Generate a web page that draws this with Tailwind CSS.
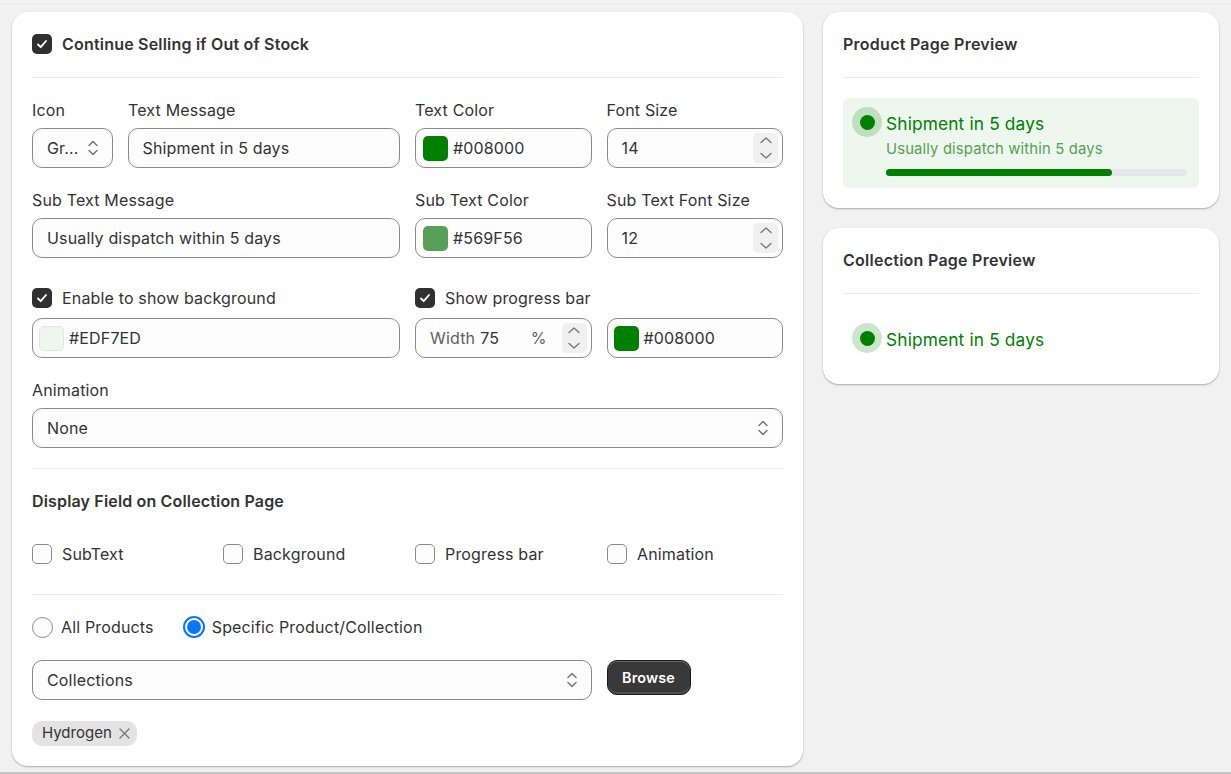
<!DOCTYPE html>
<html lang="en">
<head>
  <meta charset="UTF-8" />
  <meta name="viewport" content="width=device-width, initial-scale=1.0"/>
  <title>Inventory message</title>
  <script src="https://cdn.jsdelivr.net/npm/@tailwindcss/browser@4"></script>
</head>
<body class="bg-[#f1f1f1] font-['Inter',sans-serif] text-[16px] leading-6 tracking-[0.16px] text-[#333333]">
  <div class="h-[3px] bg-[#f3f3f3] border-b border-[#ebebeb] box-content"></div>
  <div class="flex items-start gap-5 px-3 pt-2 h-[770px] overflow-hidden border-b-2 border-[#c8c8c8]">

    <!-- settings card -->
    <div class="w-[791px] h-[754px] shrink-0 bg-white rounded-[16px] p-5 shadow-[0_1px_2px_rgba(0,0,0,0.3)]">
      <div class="flex items-center gap-2.5 pb-[21px] border-b border-[#ebebeb] font-semibold tracking-[0.2px]">
        <span class="w-5 h-5 rounded-[5px] bg-[#303030] flex items-center justify-center">
          <svg width="12" height="12" viewBox="0 0 12 12" fill="none" stroke="#fff" stroke-width="1.8" stroke-linecap="round" stroke-linejoin="round"><path d="M2 6.5 4.7 9.2 10 3"/></svg>
        </span>
        Continue Selling if Out of Stock
      </div>

      <div class="grid grid-cols-4 gap-x-[15px] pt-5">
        <div class="col-span-2 flex gap-[15px]">
          <div class="w-[81px] shrink-0">
            <div class="mb-1.5">Icon</div>
            <div class="h-10 rounded-[10px] border border-[#8a8a8a] bg-[#fdfdfd] pl-3.5 pr-[13px] flex items-center justify-between">
              Gr...
              <svg width="12" height="18" viewBox="0 0 12 18" fill="none" stroke="#757575" stroke-width="1.5" stroke-linecap="round" stroke-linejoin="round"><path d="M2 6.5 6 2.5 10 6.5M2 11.5 6 15.5 10 11.5"/></svg>
            </div>
          </div>
          <div class="flex-1">
            <div class="mb-1.5">Text Message</div>
            <div class="h-10 rounded-[10px] border border-[#8a8a8a] bg-[#fdfdfd] px-[13.5px] flex items-center">Shipment in 5 days</div>
          </div>
        </div>
        <div>
          <div class="mb-1.5">Text Color</div>
          <div class="h-10 rounded-[10px] border border-[#8a8a8a] bg-[#fdfdfd] pl-[7px] flex items-center gap-[5px]">
            <span class="w-[25px] h-[25px] rounded-[5px] bg-[#008000]"></span>#008000
          </div>
        </div>
        <div>
          <div class="mb-1.5">Font Size</div>
          <div class="h-10 rounded-[10px] border border-[#8a8a8a] bg-[#fdfdfd] pl-3.5 pr-1 flex items-center justify-between">
            14
            <span class="w-[25px] h-[30px] rounded-[5px] bg-[#f0f0f0] flex items-center justify-center">
              <svg width="14" height="24" viewBox="0 0 14 24" fill="none" stroke="#757575" stroke-width="1.3" stroke-linecap="round" stroke-linejoin="round"><path d="M2 6.5 7 2 12 6.5M2 17.5 7 22 12 17.5"/></svg>
            </span>
          </div>
        </div>

        <div class="col-span-2 mt-5">
          <div class="mb-1.5">Sub Text Message</div>
          <div class="h-10 rounded-[10px] border border-[#8a8a8a] bg-[#fdfdfd] px-3.5 flex items-center">Usually dispatch within 5 days</div>
        </div>
        <div class="mt-5">
          <div class="mb-1.5">Sub Text Color</div>
          <div class="h-10 rounded-[10px] border border-[#8a8a8a] bg-[#fdfdfd] pl-[7px] flex items-center gap-[5px]">
            <span class="w-[25px] h-[25px] rounded-[5px] bg-[#569f56]"></span>#569F56
          </div>
        </div>
        <div class="mt-5">
          <div class="mb-1.5">Sub Text Font Size</div>
          <div class="h-10 rounded-[10px] border border-[#8a8a8a] bg-[#fdfdfd] pl-3.5 pr-1 flex items-center justify-between">
            12
            <span class="w-[25px] h-[30px] rounded-[5px] bg-[#f0f0f0] flex items-center justify-center">
              <svg width="14" height="24" viewBox="0 0 14 24" fill="none" stroke="#757575" stroke-width="1.3" stroke-linecap="round" stroke-linejoin="round"><path d="M2 6.5 7 2 12 6.5M2 17.5 7 22 12 17.5"/></svg>
            </span>
          </div>
        </div>

        <div class="col-span-2 mt-[30px]">
          <div class="flex items-center gap-2.5 h-5 mb-2.5">
            <span class="w-5 h-5 rounded-[5px] bg-[#303030] flex items-center justify-center">
              <svg width="12" height="12" viewBox="0 0 12 12" fill="none" stroke="#fff" stroke-width="1.8" stroke-linecap="round" stroke-linejoin="round"><path d="M2 6.5 4.7 9.2 10 3"/></svg>
            </span>
            Enable to show background
          </div>
          <div class="h-10 rounded-[10px] border border-[#8a8a8a] bg-[#fdfdfd] pl-[6px] flex items-center gap-[5px]">
            <span class="w-[25px] h-[25px] rounded-[5px] bg-[#edf7ed] border border-[#dfe8df]"></span>#EDF7ED
          </div>
        </div>
        <div class="mt-[30px]">
          <div class="flex items-center gap-2.5 h-5 mb-2.5">
            <span class="w-5 h-5 rounded-[5px] bg-[#303030] flex items-center justify-center">
              <svg width="12" height="12" viewBox="0 0 12 12" fill="none" stroke="#fff" stroke-width="1.8" stroke-linecap="round" stroke-linejoin="round"><path d="M2 6.5 4.7 9.2 10 3"/></svg>
            </span>
            Show progress bar
          </div>
          <div class="h-10 rounded-[10px] border border-[#8a8a8a] bg-[#fdfdfd] pl-3.5 pr-1 flex items-center">
            <span class="text-[#616161] mr-[5px]">Width</span>75
            <span class="ml-auto mr-[15px] text-[#616161]">%</span>
            <span class="w-[25px] h-[30px] rounded-[5px] bg-[#f0f0f0] flex items-center justify-center">
              <svg width="14" height="24" viewBox="0 0 14 24" fill="none" stroke="#757575" stroke-width="1.3" stroke-linecap="round" stroke-linejoin="round"><path d="M2 6.5 7 2 12 6.5M2 17.5 7 22 12 17.5"/></svg>
            </span>
          </div>
        </div>
        <div class="mt-[60px]">
          <div class="h-10 rounded-[10px] border border-[#8a8a8a] bg-[#fdfdfd] pl-[6px] flex items-center gap-[5px]">
            <span class="w-[25px] h-[25px] rounded-[5px] bg-[#008000]"></span>#008000
          </div>
        </div>
      </div>

      <div class="mt-5 mb-5">
        <div class="mb-1.5">Animation</div>
        <div class="h-10 rounded-[10px] border border-[#8a8a8a] bg-[#fdfdfd] pl-3.5 pr-[13px] flex items-center justify-between">
          None
          <svg width="12" height="18" viewBox="0 0 12 18" fill="none" stroke="#757575" stroke-width="1.5" stroke-linecap="round" stroke-linejoin="round"><path d="M2 6.5 6 2.5 10 6.5M2 11.5 6 15.5 10 11.5"/></svg>
        </div>
      </div>

      <div class="border-t border-[#ebebeb] pt-5 pb-[30px]">
        <div class="font-semibold mb-[31px]">Display Field on Collection Page</div>
        <div class="grid grid-cols-[176px_177px_177px_176px] gap-x-[15px]">
          <div class="flex items-center gap-2.5 h-5"><span class="w-5 h-5 rounded-[5px] border border-[#8a8a8a] bg-[#fdfdfd]"></span>SubText</div>
          <div class="flex items-center gap-2.5 h-5"><span class="w-5 h-5 rounded-[5px] border border-[#8a8a8a] bg-[#fdfdfd]"></span>Background</div>
          <div class="flex items-center gap-2.5 h-5"><span class="w-5 h-5 rounded-[5px] border border-[#8a8a8a] bg-[#fdfdfd]"></span>Progress bar</div>
          <div class="flex items-center gap-2.5 h-5"><span class="w-5 h-5 rounded-[5px] border border-[#8a8a8a] bg-[#fdfdfd]"></span>Animation</div>
        </div>
      </div>

      <div class="border-t border-[#ebebeb] pt-5">
        <div class="flex items-center h-6 mb-[21px]">
          <span class="w-[21px] h-[21px] rounded-full border border-[#8a8a8a] bg-[#fdfdfd] mr-2"></span>All Products
          <span class="w-[22px] h-[22px] rounded-full border-2 border-[#0a75ff] bg-white ml-[29px] mr-[7px] flex items-center justify-center"><span class="w-3.5 h-3.5 rounded-full bg-[#0a75ff]"></span></span>Specific Product/Collection
        </div>
        <div class="grid grid-cols-4 gap-x-[15px] items-start">
          <div class="col-span-3">
            <div class="h-10 rounded-[10px] border border-[#8a8a8a] bg-[#fdfdfd] pl-3.5 pr-[13px] flex items-center justify-between">
              Collections
              <svg width="12" height="18" viewBox="0 0 12 18" fill="none" stroke="#757575" stroke-width="1.5" stroke-linecap="round" stroke-linejoin="round"><path d="M2 6.5 6 2.5 10 6.5M2 11.5 6 15.5 10 11.5"/></svg>
            </div>
          </div>
          <div>
            <button class="w-[84px] h-[35px] rounded-[10px] border border-[#1a1a1a] bg-[#383838] text-white text-[14.4px] font-semibold shadow-[inset_0_1px_0_rgba(255,255,255,0.25),inset_0_-2px_0_rgba(255,255,255,0.12)]">Browse</button>
          </div>
        </div>
        <div class="mt-[21px] inline-flex items-center h-[25px] pl-2.5 pr-[6px] pb-px rounded-[10px] bg-[#e3e3e3] text-[15px] tracking-normal gap-1.5">
          Hydrogen
          <svg width="13" height="13" viewBox="0 0 13 13" fill="none" stroke="#757575" stroke-width="1.3" stroke-linecap="round" class="mt-px"><path d="M2 2 11 11M11 2 2 11"/></svg>
        </div>
      </div>
    </div>

    <!-- previews -->
    <div class="w-[396px] shrink-0 flex flex-col gap-5">
      <div class="bg-white rounded-[16px] p-5 h-[196px] shadow-[0_1px_2px_rgba(0,0,0,0.3)]">
        <div class="font-semibold tracking-[0.26px] pb-[21px] border-b border-[#ebebeb]">Product Page Preview</div>
        <div class="mt-5 h-[90px] rounded-[6px] bg-[#edf7ed] pl-[9px] pr-3 pt-[9px] flex items-start">
          <span class="w-[30px] h-[30px] shrink-0 rounded-full bg-[#008000]/20 flex items-center justify-center"><span class="w-[15px] h-[15px] rounded-full bg-[#008000]"></span></span>
          <div class="ml-[4px] flex-1 pt-[5px]">
            <div class="text-[17.3px] leading-[24px] text-[#008000]">Shipment in 5 days</div>
            <div class="text-[14.8px] leading-[20px] mt-[3px] text-[#569f56]">Usually dispatch within 5 days</div>
            <div class="mt-[10px] h-[7px] rounded-full bg-[#e5e7eb]"><div class="h-full w-3/4 rounded-full bg-[#008000]"></div></div>
          </div>
        </div>
      </div>
      <div class="bg-white rounded-[16px] p-5 h-[156px] shadow-[0_1px_2px_rgba(0,0,0,0.3)]">
        <div class="font-semibold tracking-[0.26px] pb-[21px] border-b border-[#ebebeb]">Collection Page Preview</div>
        <div class="mt-5 pl-[9px] pt-[9px] flex items-start">
          <span class="w-[30px] h-[30px] shrink-0 rounded-full bg-[#008000]/20 flex items-center justify-center"><span class="w-[15px] h-[15px] rounded-full bg-[#008000]"></span></span>
          <div class="ml-[4px] pt-[5px] text-[17.3px] leading-[24px] text-[#008000]">Shipment in 5 days</div>
        </div>
      </div>
    </div>
  </div>
</body>
</html>
